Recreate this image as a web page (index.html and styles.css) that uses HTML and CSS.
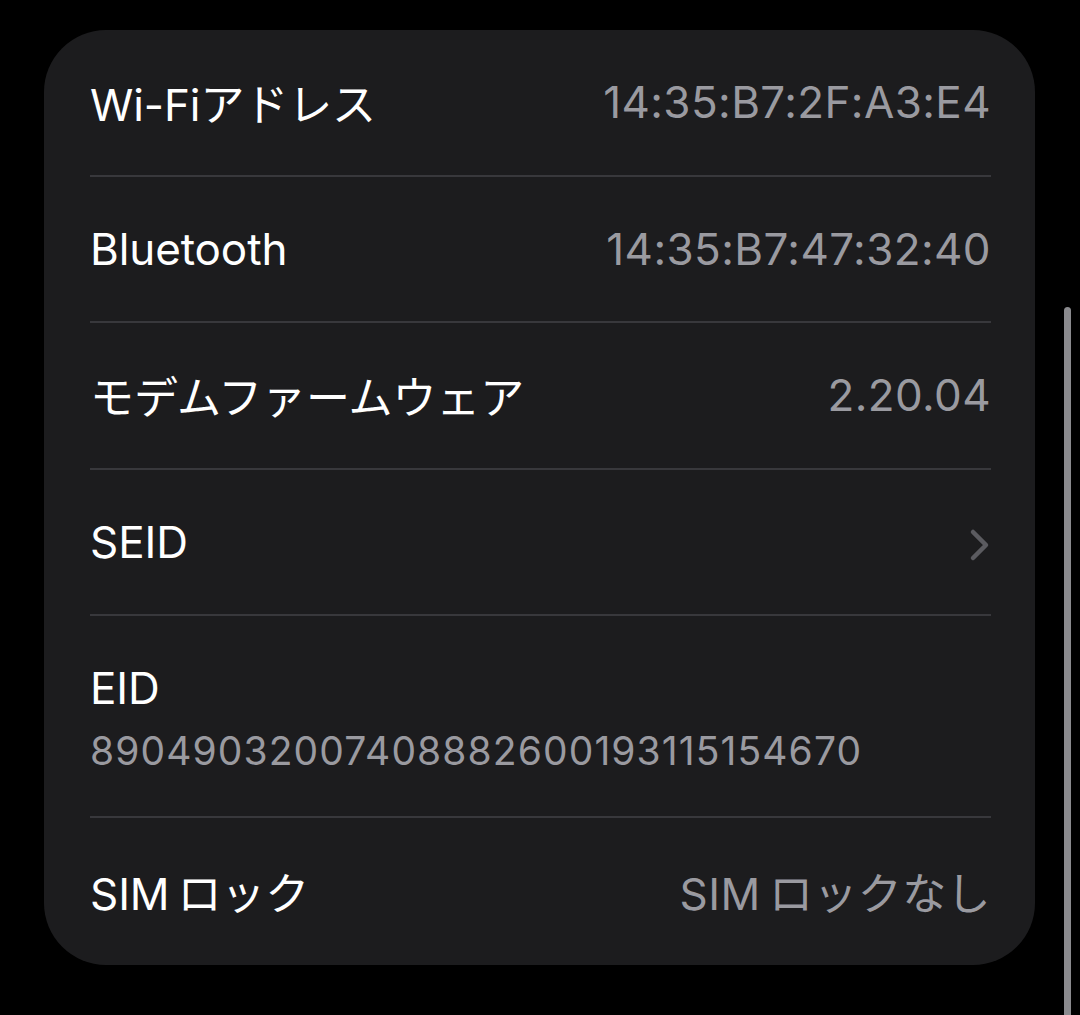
FILE: index.html
```html
<!DOCTYPE html>
<html lang="ja">
<head>
    <meta charset="UTF-8">
    <meta name="viewport" content="width=device-width, initial-scale=1.0">
    <title>情報</title>
    <link rel="stylesheet" href="styles.css">
</head>
<body>
    <div class="card">
        <div class="row">
            <span class="label">Wi-Fiアドレス</span>
            <span class="value">14:35:B7:2F:A3:E4</span>
        </div>
        <div class="row">
            <span class="label">Bluetooth</span>
            <span class="value">14:35:B7:47:32:40</span>
        </div>
        <div class="row">
            <span class="label">モデムファームウェア</span>
            <span class="value">2.20.04</span>
        </div>
        <div class="row">
            <span class="label">SEID</span>
            <svg class="chevron" width="22" height="34" viewBox="0 0 22 34">
                <path d="M4 4 L17 17 L4 30" fill="none" stroke="#5b5b60" stroke-width="4.5" stroke-linecap="round" stroke-linejoin="round"/>
            </svg>
        </div>
        <div class="row row-stack">
            <span class="label">EID</span>
            <span class="value sub">89049032007408882600193115154670</span>
        </div>
        <div class="row">
            <span class="label">SIM&#8201;ロック</span>
            <span class="value">SIM&#8201;ロックなし</span>
        </div>
    </div>
    <div class="scrollbar"></div>
</body>
</html>
```

FILE: styles.css
```css
body { margin: 0; background: #000; font-family: "Inter", "Noto Sans CJK JP", sans-serif; height: 1015px; overflow: hidden; }
.card { margin: 30px 0 0 44px; width: 991px; box-sizing: border-box; padding: 0 44px 0 46px; background: #1c1c1e; border-radius: 62px; }
.row { display: flex; align-items: center; justify-content: space-between; height: 146.5px; box-sizing: border-box; border-bottom: 2px solid #38383c; }
.row:last-child { border-bottom: none; }
.row-stack { flex-direction: column; align-items: flex-start; justify-content: center; height: 202px; gap: 12px; padding-top: 2px; }
.label { color: #fff; font-size: 44px; letter-spacing: -0.1px; }
.value { color: #9a9aa0; font-size: 44px; letter-spacing: 0.4px; }
.sub { font-size: 39px; letter-spacing: 1.1px; }
.chevron { margin-top: 6px; }
.scrollbar { position: absolute; left: 1064px; top: 307px; width: 7px; height: 720px; border-radius: 4px; background: #8a8a8e; }
```
